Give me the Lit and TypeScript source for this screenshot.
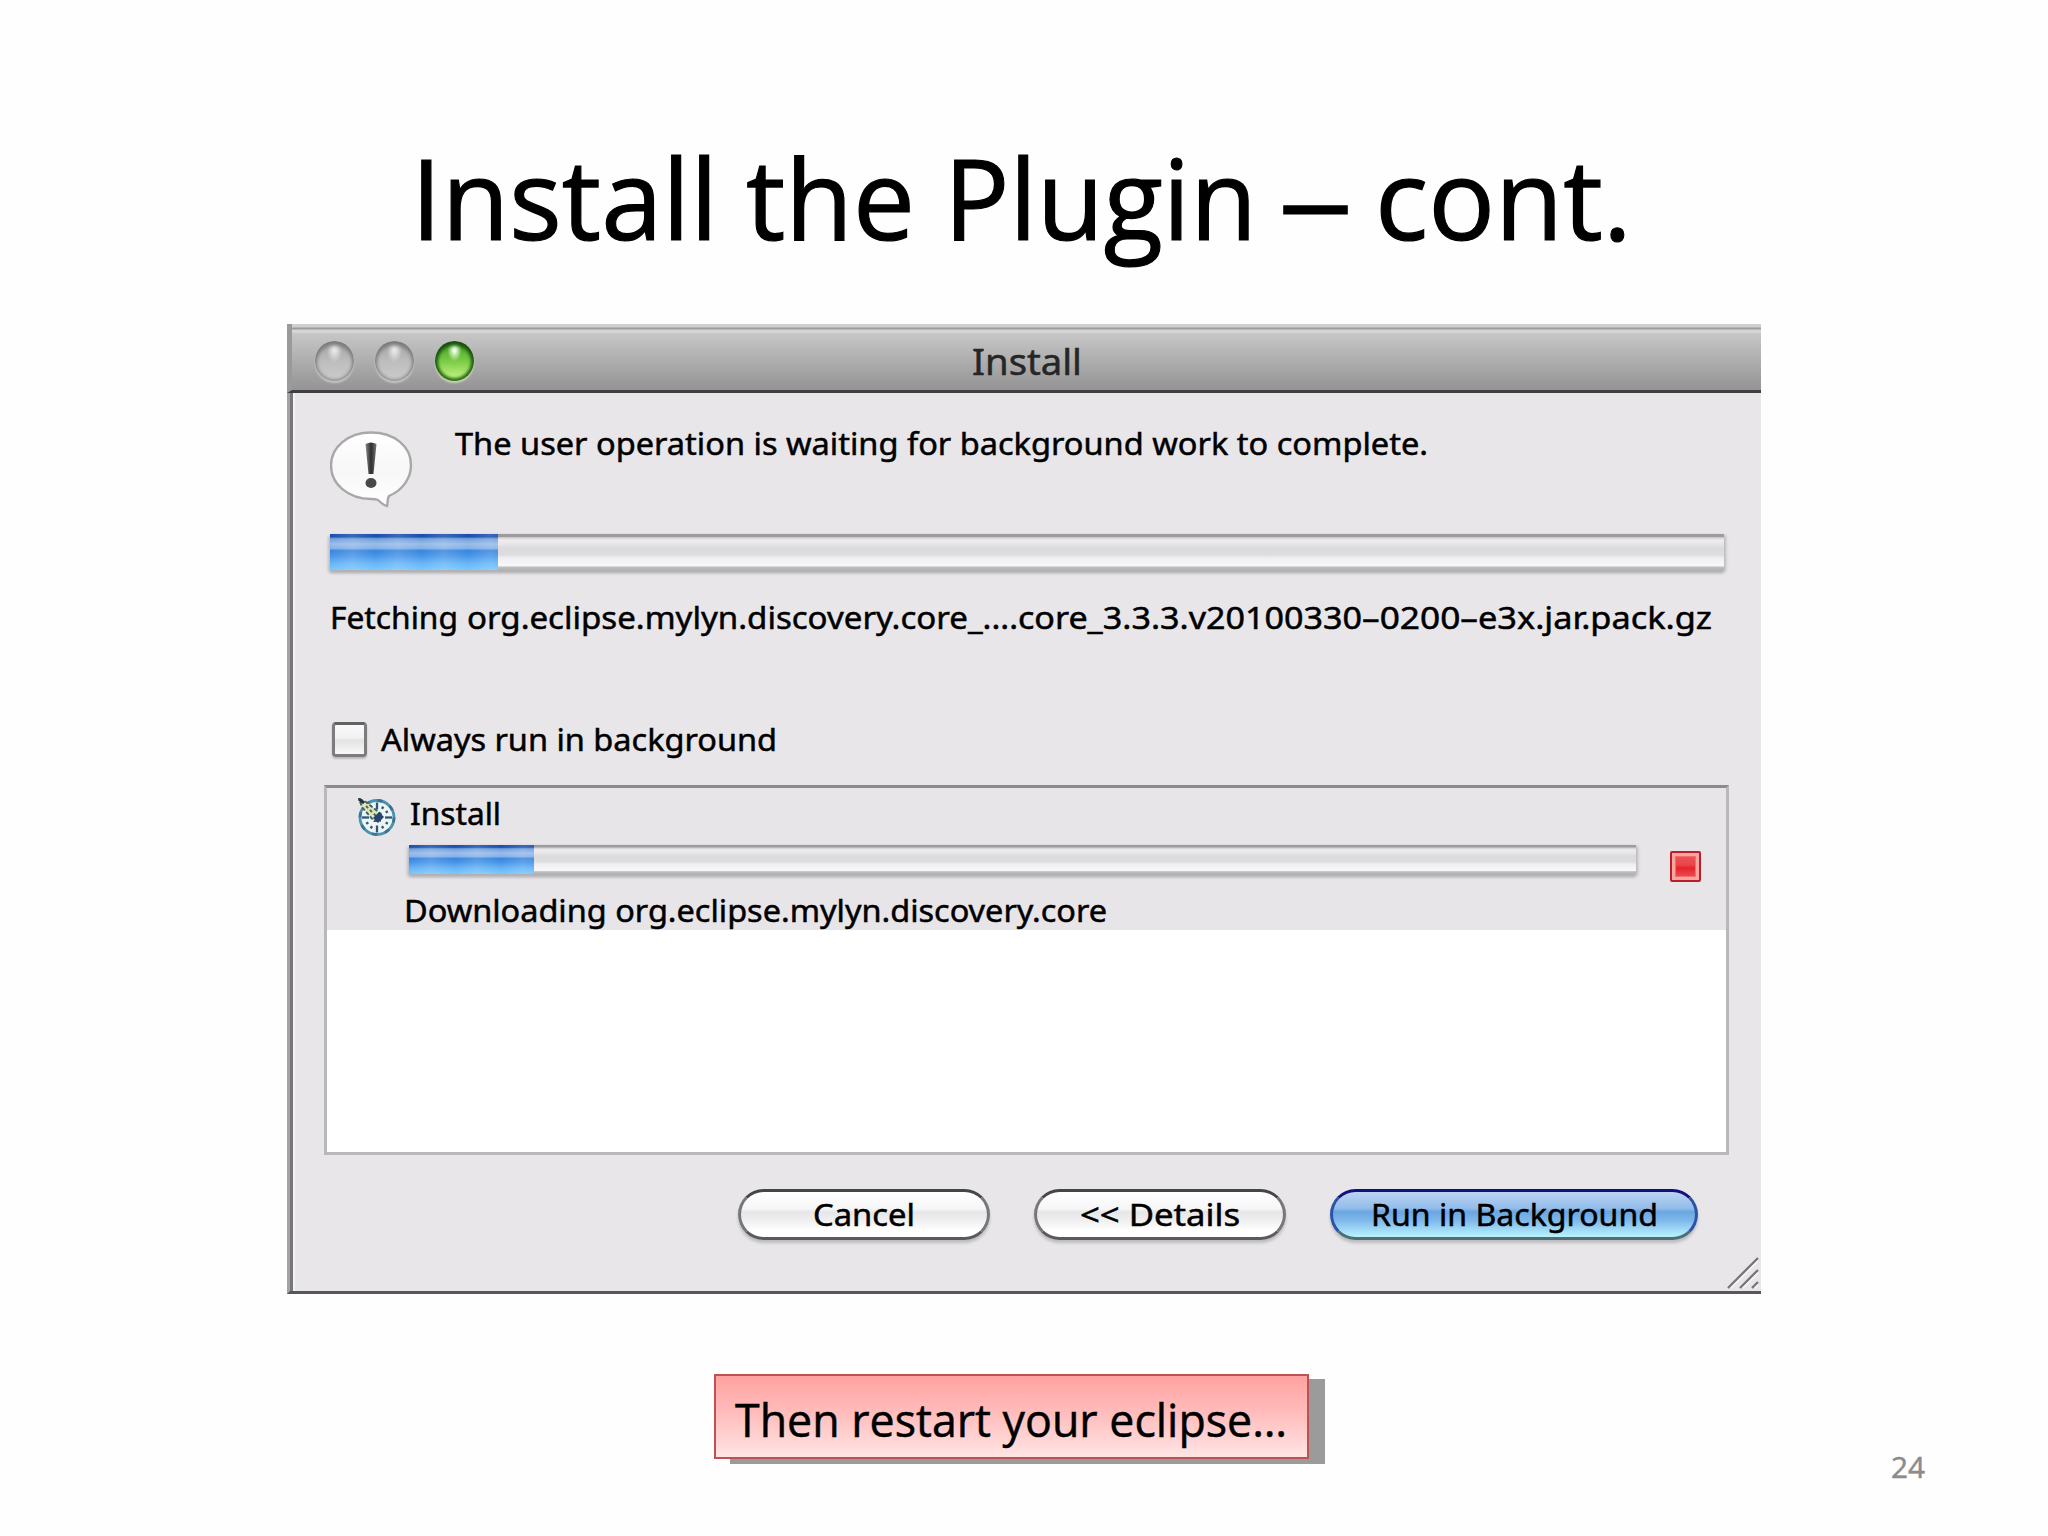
import { LitElement, css, html, svg } from "lit";
import { customElement, property } from "lit/decorators.js";

/** text, start and advance width of a piece of a line */
type Run = [string, number, number];

/**
 * Single line of text, set to an exact advance width
 */
@customElement("fit-text")
export class FitText extends LitElement {
  @property({ type: String })
  text = "";

  @property({ type: Number })
  width = 100;

  @property({ type: Number })
  size = 31;

  /**
   * Pieces of the line that are fitted separately, instead of text
   */
  @property({ attribute: false })
  runs?: Run[];

  render() {
    const base = this.size * 0.8;
    const runs: Run[] = this.runs ?? [[this.text, 0, this.width]];
    return html`
      <svg width=${this.width} height=${this.size}>
        ${runs.map(
          ([text, x, width]) => svg`<text
            x=${x}
            y=${base}
            font-size=${this.size}
            textLength=${width}
            lengthAdjust="spacingAndGlyphs"
          >${text}</text>`
        )}
      </svg>
    `;
  }

  static styles = css`
    :host {
      display: block;
      flex: none;
    }
    svg {
      display: block;
      overflow: visible;
    }
    text {
      fill: currentColor;
      stroke: currentColor;
      stroke-width: var(--text-weight, 0);
    }
  `;
}

@customElement("aqua-progress")
export class AquaProgress extends LitElement {
  /**
   * Completed part, in percent
   */
  @property({ type: Number })
  value = 0;

  render() {
    return html`<div class="fill" style="width: ${this.value}%"></div>`;
  }

  static styles = css`
    :host {
      display: block;
      box-sizing: border-box;
      background: linear-gradient(
        #9c9b9e 0 7%,
        #d0cfd2 10%,
        #efedf0 17%,
        #e4e2e5 32%,
        #dbdadd 38%,
        #dddcdf 58%,
        #efeef1 66%,
        #f8f7fa 88%,
        #c0bfc2 92%,
        #b0afb2 100%
      );
      box-shadow: 0 3px 3px #b0afb3, 2px 1px 3px #c4c3c7, -2px 2px 3px #c9c8cc;
    }
    .fill {
      height: 100%;
      background:
        repeating-linear-gradient(
          90deg,
          #fff0 0,
          #ffffff24 22px,
          #fff0 46px
        ),
        linear-gradient(
          #1c4fae 0 8%,
          #6d9fdd 13%,
          #9abce9 28%,
          #83b1e8 40%,
          #3a86df 46%,
          #4391e6 58%,
          #65b3f6 80%,
          #78c8ff 100%
        );
    }
  `;
}

const heading: Run[] = [
  ["Install", 0, 307],
  ["the", 335, 169],
  ["Plugin", 533, 313],
  ["–", 867, 75],
  ["cont.", 964, 257],
];

const fetching: Run[] = [
  ["Fetching", 0, 128],
  ["org.eclipse.mylyn.discovery.core_....", 137, 551],
  ["core_3.3.3.v20100330", 688, 344],
  ["–0200–", 1032, 116],
  ["e3x.jar.pack.gz", 1148, 234],
];

const bubbleIcon = svg`
  <defs>
    <linearGradient id="bubble" x1="0" y1="0" x2="0" y2="1">
      <stop offset="0" stop-color="#ffffff" />
      <stop offset="0.5" stop-color="#f7f7f7" />
      <stop offset="1" stop-color="#ffffff" />
    </linearGradient>
    <linearGradient id="mark" x1="0" y1="0" x2="1" y2="0">
      <stop offset="0" stop-color="#8a8a8a" />
      <stop offset="0.5" stop-color="#2c2c2c" />
      <stop offset="1" stop-color="#777777" />
    </linearGradient>
  </defs>
  <path
    d="M41 2.500C18 2.500 1 17 1 35.500S18 69 41 69c3 0 5 0 7 1 3 3 5 5 9 6 1-3 0-7 2-10 14-6 22-18 22-31C81 16 64 2.500 41 2.500Z"
    fill="url(#bubble)" stroke="#a8a8a8" stroke-width="2.400"
  />
  <path d="M35.500 14q5.500-3 11 0l-3 30h-5Z" fill="url(#mark)" />
  <ellipse cx="41" cy="53" rx="5.500" ry="5" fill="#484848" />
`;

const ticks = [0, 30, 60, 90, 120, 150, 180, 210, 240, 270, 330];

const clockIcon = svg`
  <circle cx="19" cy="19.500" r="17" fill="#edf5f5" stroke="#4b92b0" stroke-width="2.800" />
  <circle cx="19" cy="19.500" r="17" fill="none" stroke="#3b7391" stroke-width="2.800" stroke-dasharray="5 8.350" />
  ${ticks.map(
    (a) => svg`<path
      d=${a % 90 ? "M19 7v2.500" : "M19 4.500v7"}
      stroke="#2f5877" stroke-width="2.300" transform="rotate(${a} 19 19.500)"
    />`
  )}
  <path d="M1 1 8 4 23 16l-1 7-6 0L4 9Z" fill="#dfe5b4" stroke="#3a5c6c" stroke-width="1.800" stroke-dasharray="4 2" />
  <path d="M1 1l5 4" stroke="#22303c" stroke-width="3" />
  <path d="M8 8 19 19" stroke="#4a6a5a" stroke-width="2" stroke-dasharray="3 2.500" />
  <path d="m21 14 5 5-6 6-5-5Z" fill="#27446f" />
`;

@customElement("app-root")
export class AppRoot extends LitElement {
  render() {
    return html`
      <fit-text class="heading" .runs=${heading} width="1224" size="111"></fit-text>

      <section class="window">
        <header class="titlebar">
          <div class="lights">
            <span class="light"></span>
            <span class="light"></span>
            <span class="light green"></span>
          </div>
          <fit-text class="caption" text="Install" width="110" size="37"></fit-text>
        </header>

        <div class="content">
          <div class="message">
            <svg width="84" height="80">${bubbleIcon}</svg>
            <fit-text text="The user operation is waiting for background work to complete." width="973"></fit-text>
          </div>
          <aqua-progress class="total" value="12.04"></aqua-progress>
          <fit-text class="status" .runs=${fetching} width="1383"></fit-text>
          <label class="option">
            <span class="checkbox"></span>
            <fit-text text="Always run in background" width="396"></fit-text>
          </label>

          <div class="jobs">
            <div class="job">
              <svg class="clock" width="39" height="39">${clockIcon}</svg>
              <div class="details">
                <fit-text class="name" text="Install" width="91"></fit-text>
                <aqua-progress class="part" value="10.2"></aqua-progress>
                <fit-text class="step" text="Downloading org.eclipse.mylyn.discovery.core" width="703"></fit-text>
              </div>
              <span class="stop"></span>
            </div>
          </div>

          <footer class="actions">
            <button class="button">
              <fit-text text="Cancel" width="102"></fit-text>
            </button>
            <button class="button">
              <fit-text text="&lt;&lt; Details" width="160"></fit-text>
            </button>
            <button class="button primary">
              <fit-text text="Run in Background" width="287"></fit-text>
            </button>
          </footer>
        </div>
        <svg class="grip" width="32" height="32">
          <path d="M1 31 31 1M13 31 31 13M25 31l6-6" />
          <path class="shine" d="M4 31 31 4M16 31 31 16M28 31l3-3" />
        </svg>
      </section>

      <div class="bottom">
        <div class="callout">
          <fit-text text="Then restart your eclipse…" width="552" size="46"></fit-text>
        </div>
        <fit-text class="page" text="24" width="34" size="29.5"></fit-text>
      </div>
    `;
  }

  static styles = css`
    :host {
      display: flex;
      flex-direction: column;
      box-sizing: border-box;
      width: 2048px;
      height: 1536px;
      padding-top: 151px;
      overflow: hidden;
      background: #fefefe;
      color: #000;
      font-family: "Open Sans", sans-serif;
    }
    .heading {
      --text-weight: 1.2px;
      margin-left: 411px;
    }
    .window {
      --text-weight: 0.5px;
      position: relative;
      flex: none;
      box-sizing: border-box;
      width: 1474px;
      height: 970px;
      margin: 62px 0 0 287px;
      border-left: 3px solid #a3a3a3;
      border-bottom: 3px solid #58565a;
      background: #e8e6e9;
      box-shadow: inset 3px 0 #777678, inset 5px 0 #f3f2f4;
      font-family: "Noto Sans", sans-serif;
    }
    .titlebar {
      display: grid;
      grid-template-columns: 1fr auto 1fr;
      align-items: start;
      box-sizing: border-box;
      height: 69px;
      margin-left: -3px;
      border-bottom: 3px solid #403e40;
      border-left: 5px solid #9a9a9a;
      background: linear-gradient(
        #cfcfcf 0 3px,
        #9b9b9b 4px 5px,
        #d6d6d6 6px 8px,
        #c6c6c6 10px,
        #b5b4b5 30px,
        #979697 63px
      );
    }
    .lights {
      display: flex;
      gap: 21px;
      padding: 17px 0 0 23px;
    }
    .light {
      width: 39px;
      height: 40px;
      border-radius: 50%;
      background:
        radial-gradient(ellipse at 50% 22%, #e6e6e6 0 5%, #e6e6e600 28%),
        linear-gradient(#a4a4a4, #bdbdbd 50%, #cbcbcb);
      box-shadow: inset 0 4px 4px #7a7a7a, inset 0 0 3px 2px #979797, 0 2px 2px #c6c6c6;
    }
    .green {
      background:
        radial-gradient(ellipse at 50% 22%, #e9ffe0 0 5%, #d9ffc800 26%),
        linear-gradient(#3f9a25, #78c944 48%, #b9ef79 88%);
      box-shadow: inset 0 4px 4px #164f0b, inset 0 0 3px 3px #2d6f1b, 0 2px 2px #c9d1b5;
    }
    .caption {
      padding-top: 21px;
      color: #262626;
    }
    .content {
      display: flex;
      flex-direction: column;
      padding: 37px 0 0 40px;
    }
    .message {
      display: flex;
      gap: 41px;
      height: 80px;
    }
    .total {
      width: 1394px;
      height: 36px;
      margin-top: 24px;
    }
    .status {
      margin-top: 34px;
    }
    .option {
      display: flex;
      gap: 14px;
      margin: 87px 0 0 2px;
    }
    .option fit-text {
      margin-top: 4px;
    }
    .checkbox {
      box-sizing: border-box;
      width: 35px;
      height: 35px;
      border: 3px solid #7c7b7d;
      border-top-color: #626163;
      border-radius: 4px;
      background: linear-gradient(#fafafa, #f1f1f1 45%, #e3e2e4 52%, #f8f8f8);
      box-shadow: 0 2px 2px #bbb;
    }
    .jobs {
      box-sizing: border-box;
      width: 1405px;
      height: 370px;
      margin: 28px 0 0 -6px;
      border: 3px solid #b9b8bb;
      border-top-color: #8b8a8d;
      background: #fff;
    }
    .job {
      display: flex;
      height: 142px;
      background: #e7e5e8;
    }
    .clock {
      margin: 10px 0 0 31px;
    }
    .details {
      margin-left: 12px;
    }
    .name {
      margin: 12px 0 0 1px;
    }
    .part {
      width: 1227px;
      height: 29px;
      margin-top: 14px;
    }
    .step {
      margin: 23px 0 0 -5px;
    }
    .stop {
      box-sizing: border-box;
      width: 31px;
      height: 31px;
      margin: 63px 0 0 34px;
      border: 2px solid #b91f2b;
      border-radius: 2px;
      background: linear-gradient(#e95a5f, #ec4248 45%, #e3242d 55%, #ee5a5c);
      box-shadow: inset 0 0 0 3px #f8a5a0, inset 0 0 0 4px #ee6f6d;
    }
    .actions {
      display: flex;
      gap: 44px;
      margin: 34px 0 0 408px;
    }
    .button {
      display: flex;
      justify-content: center;
      box-sizing: border-box;
      width: 252px;
      height: 51px;
      padding: 9px 0 0;
      border: 3px solid #77767a;
      border-top-color: #454447;
      border-bottom-color: #5a595c;
      border-radius: 26px;
      background: linear-gradient(#fff, #f6f6f7 38%, #e6e5e7 44%, #efeef0 62%, #fff 85%);
      box-shadow: 0 3px 3px #bdbcbf;
      font: inherit;
      color: #000;
    }
    .primary {
      width: 368px;
      border-color: #12107c #2c53a5 #4e6e78;
      background: linear-gradient(#bcd3f1, #93bdeb 36%, #6ba6e2 44%, #7db6ea 62%, #a9e4fa 90%, #b9f4fb);
    }
    .grip {
      position: absolute;
      right: 2px;
      bottom: 2px;
      fill: none;
      stroke: #77767a;
      stroke-width: 2.4;
    }
    .shine {
      stroke: #f4f3f5;
      stroke-width: 1.6;
    }
    .bottom {
      --text-weight: 0.5px;
      display: flex;
      margin: 80px 0 0 714px;
    }
    .callout {
      box-sizing: border-box;
      width: 595px;
      height: 85px;
      padding: 24px 0 0 19px;
      border: 2px solid #bf5053;
      background: linear-gradient(#ffa2a1, #ffbcbb 45%, #ffe5e5);
      box-shadow: 16px 5px #9b9b9b;
    }
    .page {
      margin: 80px 0 0 582px;
      color: #8b8b8b;
    }
  `;
}

declare global {
  interface HTMLElementTagNameMap {
    "fit-text": FitText;
    "aqua-progress": AquaProgress;
    "app-root": AppRoot;
  }
}
